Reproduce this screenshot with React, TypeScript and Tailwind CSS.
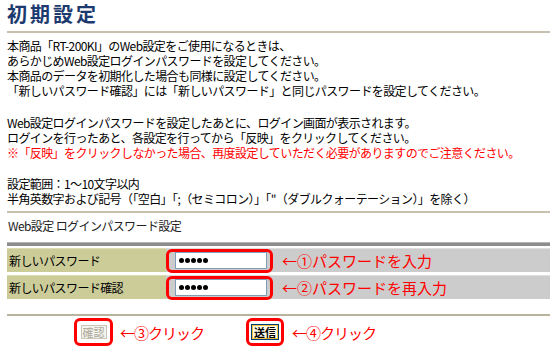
const jp = "font-['Noto_Sans_CJK_JP','Noto_Sans',sans-serif]";

function PasswordDots() {
    return (
        <div className="flex items-center gap-[1px] pl-[3px]">
            {[0, 1, 2, 3, 4].map((i) => (
                <span key={i} className="block w-[5px] h-[5px] rounded-full bg-black" />
            ))}
        </div>
    );
}

function PasswordRow({ label, note }: { label: string; note: string }) {
    return (
        <div className="flex h-[24px]">
            <div className="w-[159px] bg-[#cccc99] border-t border-[#dcdcb4] flex items-center pl-[2px] text-[12px] text-black tracking-[-0.6px]">
                {label}
            </div>
            <div className="flex-1 bg-[#cccccc] border-t border-[#dedede] flex items-center">
                {/* 赤枠 */}
                <div className="w-[107px] h-[24px] border-[3px] border-[#ff0000] rounded-[6px] flex items-center pl-[6px]">
                    <div className="w-[92px] h-[17px] bg-white border border-[#7f9db9] flex items-center">
                        <PasswordDots />
                    </div>
                </div>
                <span className="ml-[9px] text-[15px] leading-none text-[#ff0000]">{note}</span>
            </div>
        </div>
    );
}

export default function App() {
    return (
        <div className={`w-[550px] h-[359px] overflow-hidden bg-white text-black ${jp}`}>
            <h1 className="pl-[7px] pt-[3px] text-[20px] leading-[22px] font-bold tracking-[3px] text-[#1c3a6e]">初期設定</h1>
            <div className="ml-[7px] mt-[6px] h-[2px] bg-[#c6c2ad]" />

            <div className="pl-[7px] text-[12px] leading-[15px] tracking-[-0.6px] whitespace-nowrap">
                <p className="mt-[5px]">
                    本商品「RT-200KI」のWeb設定をご使用になるときは、
                    <br />
                    あらかじめWeb設定ログインパスワードを設定してください。
                    <br />
                    本商品のデータを初期化した場合も同様に設定してください。
                    <br />
                    「新しいパスワード確認」には「新しいパスワード」と同じパスワードを設定してください。
                </p>
                <p className="mt-[17px]">
                    Web設定ログインパスワードを設定したあとに、ログイン画面が表示されます。
                    <br />
                    ログインを行ったあと、各設定を行ってから「反映」をクリックしてください。
                    <br />
                    <span className="text-[#ff0000]">
                        ※「反映」をクリックしなかった場合、再度設定していただく必要がありますのでご注意ください。
                    </span>
                </p>
                <p className="mt-[16px]">
                    設定範囲：1～10文字以内
                    <br />
                    半角英数字および記号（「空白」「;（セミコロン）」「&quot;（ダブルクォーテーション）」を除く）
                </p>
            </div>

            <div className="ml-[7px] mt-[5px] h-[2px] bg-[#c6c2ad]" />

            <div className="ml-[7px]">
                <div className="pl-[1px] mt-[5px] text-[12px] leading-[15px] tracking-[-0.6px] text-[#222]">
                    Web設定 ログインパスワード設定
                </div>
                <div className="mt-[9px] h-[4px] bg-[#8c8c8c] border-t border-[#b4b4b4]" />
                <div className="mt-[2px] flex flex-col gap-[3px]">
                    <PasswordRow label="新しいパスワード" note="←①パスワードを入力" />
                    <PasswordRow label="新しいパスワード確認" note="←②パスワードを再入力" />
                </div>
                <div className="mt-[15px] h-[2px] bg-[#b8b49c]" />
            </div>

            {/* ボタン */}
            <div className="mt-[2px] pl-[74px] flex items-center">
                <div className="w-[39px] h-[28px] border-[3px] border-[#ff0000] rounded-[6px] flex items-center justify-center">
                    <button
                        disabled
                        className="w-[26px] h-[14px] border border-[#c9c7ba] bg-[#f4f3ee] text-[11px] leading-none text-[#aca899] flex items-center justify-center"
                    >
                        確認
                    </button>
                </div>
                <span className="w-[133px] pl-[7px] text-[15px] leading-none text-[#ff0000] tracking-[-1px]">←③クリック</span>
                <div className="w-[38px] h-[28px] border-[3px] border-[#ff0000] rounded-[6px] flex items-center justify-center">
                    <button className="w-[28px] h-[16px] border border-[#003c74] bg-[#fffbe6] shadow-[inset_0_0_0_1px_#f2c440] text-[11px] leading-none text-black font-bold flex items-center justify-center">
                        送信
                    </button>
                </div>
                <span className="pl-[8px] text-[15px] leading-none text-[#ff0000] tracking-[-1px]">←④クリック</span>
            </div>
        </div>
    );
}
